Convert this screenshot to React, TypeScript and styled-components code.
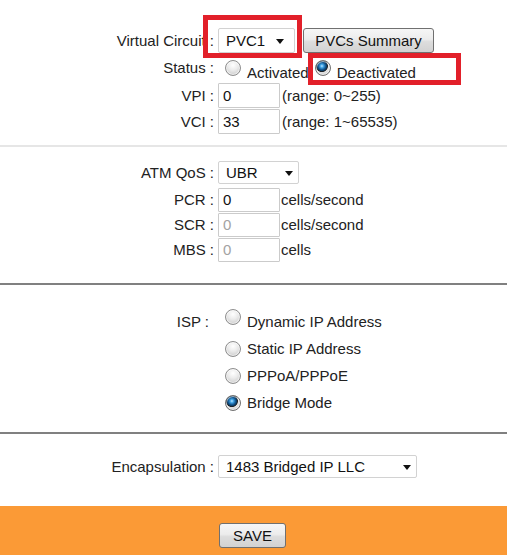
import React from "react";
import styled, { createGlobalStyle } from "styled-components";

const Global = createGlobalStyle`
  html, body { margin: 0; padding: 0; background: #ffffff; }
  body {
    font-family: "Liberation Sans", Arial, sans-serif;
    font-size: 15px;
    color: #222222;
  }
  * { box-sizing: border-box; }
`;

const Page = styled.div`
  position: relative;
  width: 100%;
  height: 555px;
  overflow: hidden;
  display: flex;
  flex-direction: column;
`;

const Section = styled.section<{ $pt: number; $pb: number }>`
  display: flex;
  flex-direction: column;
  padding: ${(p) => p.$pt}px 0 ${(p) => p.$pb}px;
`;

const Divider = styled.div<{ $color: string }>`
  height: 2px;
  background: ${(p) => p.$color};
`;

const Row = styled.div<{ $h: number; $mb?: number }>`
  display: grid;
  grid-template-columns: 218px 1fr;
  align-items: center;
  height: ${(p) => p.$h}px;
  margin-bottom: ${(p) => p.$mb ?? 0}px;
`;

const Label = styled.div<{ $pr?: number }>`
  text-align: right;
  padding-right: ${(p) => p.$pr ?? 4}px;
  white-space: nowrap;
  line-height: 17px;
`;

const Field = styled.div`
  display: flex;
  align-items: center;
  white-space: nowrap;
  line-height: 17px;
`;

const SelectWrap = styled.div<{ $w: number; $h: number; $arrowRight: number }>`
  position: relative;
  width: ${(p) => p.$w}px;
  height: ${(p) => p.$h}px;
  &::after {
    content: "";
    position: absolute;
    right: ${(p) => p.$arrowRight}px;
    top: 50%;
    margin-top: -2px;
    border-left: 4.5px solid transparent;
    border-right: 4.5px solid transparent;
    border-top: 5px solid #111;
    pointer-events: none;
  }
`;

const Select = styled.select`
  appearance: none;
  -webkit-appearance: none;
  width: 100%;
  height: 100%;
  margin: 0;
  padding: 0 0 0 7px;
  border: 1px solid #d2d2d2;
  border-radius: 2px;
  background: #fff;
  font-family: "Liberation Sans", Arial, sans-serif;
  font-size: 15px;
  color: #111;
  outline: none;
`;

const TextInput = styled.input<{ $h: number }>`
  width: 62px;
  height: ${(p) => p.$h}px;
  margin: 0;
  padding: 0 0 0 4px;
  border: 1px solid #cbcbcb;
  border-radius: 1px;
  background: #fff;
  font-family: "Liberation Sans", Arial, sans-serif;
  font-size: 15px;
  color: #111;
  outline: none;
  &:disabled {
    color: #a3a3a3;
    background: #fff;
    -webkit-text-fill-color: #a3a3a3;
    opacity: 1;
  }
`;

const Unit = styled.span<{ $ml: number }>`
  margin-left: ${(p) => p.$ml}px;
`;

const Button = styled.button<{ $w: number; $ml?: number }>`
  width: ${(p) => p.$w}px;
  height: 25px;
  margin: 0 0 0 ${(p) => p.$ml ?? 0}px;
  padding: 0;
  border: 1px solid #707070;
  border-radius: 3px;
  background: linear-gradient(#f6f6f6 0%, #ececec 45%, #dddddd 55%, #d2d2d2 100%);
  font-family: "Liberation Sans", Arial, sans-serif;
  font-size: 15px;
  color: #111;
  cursor: pointer;
`;

const Option = styled.label<{ $ml: number; $textDrop?: number; $radioLift?: number }>`
  display: flex;
  align-items: center;
  margin-left: ${(p) => p.$ml}px;
  cursor: pointer;
  & > input {
    margin-bottom: ${(p) => p.$radioLift ?? 0}px;
  }
  & > span {
    margin-top: ${(p) => p.$textDrop ?? 0}px;
  }
`;

const Radio = styled.input.attrs({ type: "radio" })`
  appearance: none;
  -webkit-appearance: none;
  width: 16px;
  height: 16px;
  margin: 0 6px 0 0;
  flex: none;
  border-radius: 50%;
  border: 1px solid #8e8e8e;
  background: radial-gradient(circle at 50% 30%, #ffffff 0%, #ececec 40%, #cfcfcf 80%, #bdbdbd 100%);
  box-shadow: inset 0 0 0 1px rgba(255, 255, 255, 0.6);
  &:checked {
    border-color: #6f6f6f;
    background:
      radial-gradient(circle at 42% 36%, #bfe7ff 0, #45a6e6 1.6px, #16609c 3.4px, #0b3559 5px, #1c1c1c 5.6px, transparent 6.4px),
      radial-gradient(circle at 50% 30%, #ffffff 0%, #ececec 40%, #cfcfcf 80%, #bdbdbd 100%);
  }
`;

const Footer = styled.footer`
  flex: 1;
  background: #fb9a36;
  display: grid;
  grid-template-columns: 219px 1fr;
  align-items: start;
  padding-top: 17px;
`;

const Marker = styled.div<{ $x: number; $y: number; $w: number; $h: number }>`
  position: absolute;
  left: ${(p) => p.$x}px;
  top: ${(p) => p.$y}px;
  width: ${(p) => p.$w}px;
  height: ${(p) => p.$h}px;
  border: 5px solid #e2202a;
  pointer-events: none;
`;

const ispOptions = [
  { label: "Dynamic IP Address", checked: false },
  { label: "Static IP Address", checked: false },
  { label: "PPPoA/PPPoE", checked: false },
  { label: "Bridge Mode", checked: true },
];

export default function App() {
  return (
    <Page>
      <Global />

      <Section $pt={28} $pb={11}>
        <Row $h={25}>
          <Label>Virtual Circuit :</Label>
          <Field>
            <SelectWrap $w={77} $h={25} $arrowRight={11}>
              <Select defaultValue="PVC1">
                <option>PVC1</option>
                <option>PVC2</option>
              </Select>
            </SelectWrap>
            <Button $w={131} $ml={8}>PVCs Summary</Button>
          </Field>
        </Row>
        <Row $h={29}>
          <Label>Status :</Label>
          <Field>
            <Option $ml={7} $textDrop={9}>
              <Radio name="status" />
              <span>Activated</span>
            </Option>
            <Option $ml={6} $textDrop={9}>
              <Radio name="status" defaultChecked />
              <span>Deactivated</span>
            </Option>
          </Field>
        </Row>
        <Row $h={26}>
          <Label>VPI :</Label>
          <Field>
            <TextInput $h={25} defaultValue="0" />
            <Unit $ml={2}>(range: 0~255)</Unit>
          </Field>
        </Row>
        <Row $h={26}>
          <Label>VCI :</Label>
          <Field>
            <TextInput $h={25} defaultValue="33" />
            <Unit $ml={2}>(range: 1~65535)</Unit>
          </Field>
        </Row>
      </Section>

      <Divider $color="#e6e6e6" />

      <Section $pt={14} $pb={21}>
        <Row $h={23} $mb={3}>
          <Label>ATM QoS :</Label>
          <Field>
            <SelectWrap $w={81} $h={23} $arrowRight={6}>
              <Select defaultValue="UBR">
                <option>UBR</option>
                <option>CBR</option>
              </Select>
            </SelectWrap>
          </Field>
        </Row>
        <Row $h={25}>
          <Label>PCR :</Label>
          <Field>
            <TextInput $h={24} defaultValue="0" />
            <Unit $ml={1}>cells/second</Unit>
          </Field>
        </Row>
        <Row $h={25}>
          <Label>SCR :</Label>
          <Field>
            <TextInput $h={24} defaultValue="0" disabled />
            <Unit $ml={1}>cells/second</Unit>
          </Field>
        </Row>
        <Row $h={25}>
          <Label>MBS :</Label>
          <Field>
            <TextInput $h={24} defaultValue="0" disabled />
            <Unit $ml={1}>cells</Unit>
          </Field>
        </Row>
      </Section>

      <Divider $color="#808080" />

      <Section $pt={23} $pb={16}>
        {ispOptions.map((o, i) => (
          <Row $h={27} key={o.label}>
            <Label $pr={9}>{i === 0 ? "ISP :" : ""}</Label>
            <Field>
              <Option $ml={7} $radioLift={i === 0 ? 9 : 0}>
                <Radio name="isp" defaultChecked={o.checked} />
                <span>{o.label}</span>
              </Option>
            </Field>
          </Row>
        ))}
      </Section>

      <Divider $color="#808080" />

      <Section $pt={21} $pb={28}>
        <Row $h={23}>
          <Label>Encapsulation :</Label>
          <Field>
            <SelectWrap $w={199} $h={23} $arrowRight={6}>
              <Select defaultValue="1483 Bridged IP LLC">
                <option>1483 Bridged IP LLC</option>
                <option>1483 Bridged IP VC-Mux</option>
              </Select>
            </SelectWrap>
          </Field>
        </Row>
      </Section>

      <Footer>
        <div />
        <div>
          <Button $w={67}>SAVE</Button>
        </div>
      </Footer>

      <Marker $x={203} $y={15} $w={99} $h={43} />
      <Marker $x={308} $y={53} $w={153} $h={32} />
    </Page>
  );
}
